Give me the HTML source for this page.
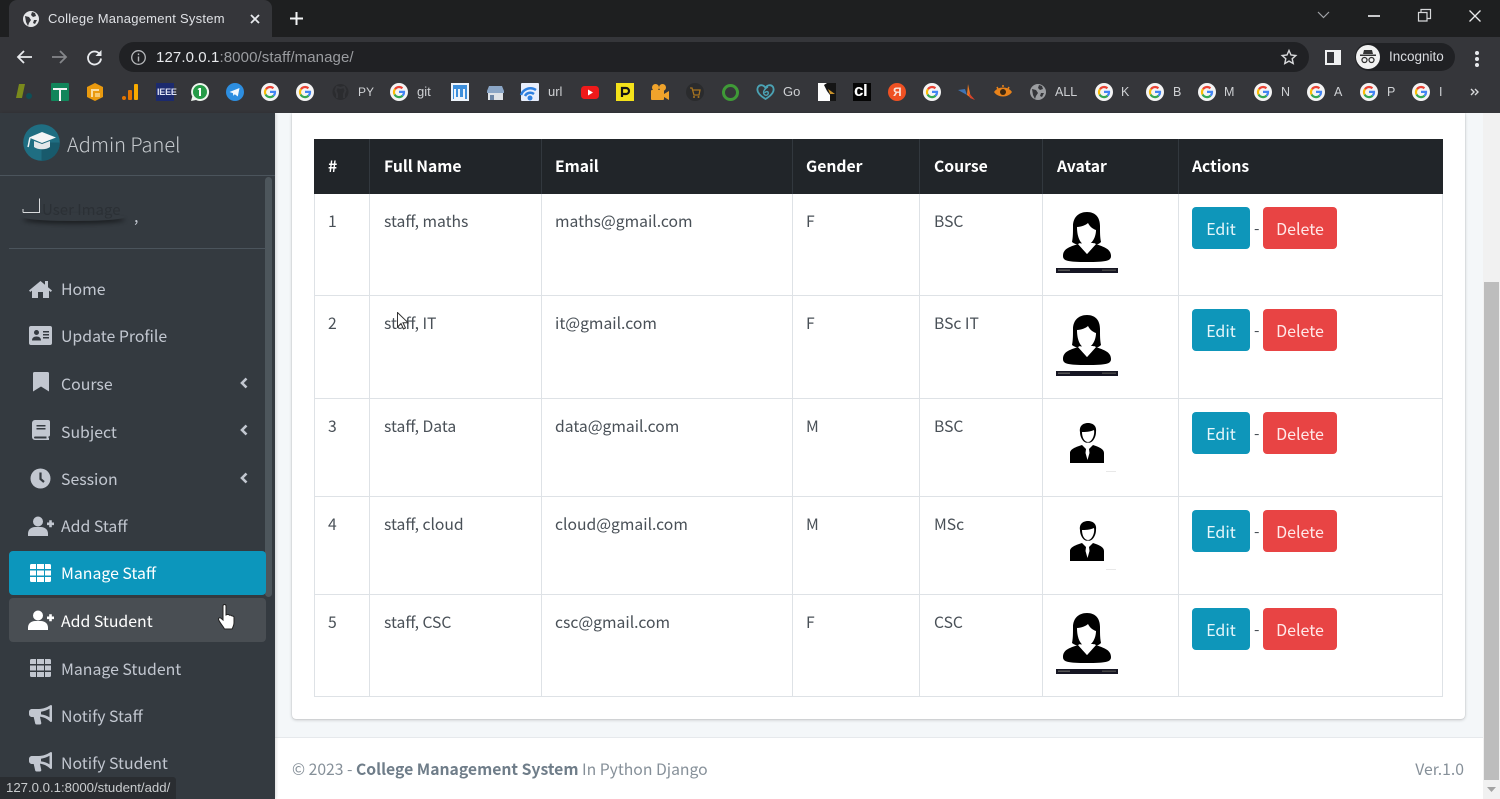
<!DOCTYPE html>
<html><head><meta charset="utf-8"><title>College Management System</title>
<style>
html,body{margin:0;padding:0;width:1500px;height:799px;overflow:hidden;background:#fff}
body{position:relative;font-family:"Noto Sans CJK SC","Liberation Sans",sans-serif;filter:blur(.35px)}
.a{position:absolute}
.t{position:absolute;white-space:nowrap;line-height:20px;height:20px}
.c{font-family:"Liberation Sans",sans-serif}
.m{font-size:15.85px;color:#c2c7d0;margin-top:1px}
.td{font-size:15.7px;color:#495057;margin-top:1px}
.th{font-size:15.7px;color:#fff;font-weight:700;margin-top:1px}
.bl{position:absolute;background:#dee2e6}
.thb{position:absolute;background:#32383e}
.b{position:absolute;height:42px;border-radius:4px;color:#fff;font-size:16px;line-height:42px;text-align:center}
.e{left:1192px;width:58px;background:#0e96ba;color:#e6f6fa}
.d{left:1263px;width:74px;background:#e84444;color:#ffe8e8}
.bk{position:absolute;font:12.5px/16px "Liberation Sans",sans-serif;color:#cfd1d4;top:84px;white-space:nowrap}
svg{position:absolute;overflow:visible}
</style></head><body>
<svg width="0" height="0" style="position:absolute">
<defs>
<symbol id="g" viewBox="0 0 18 18"><circle cx="9" cy="9" r="9" fill="#f4f4f4"/><path d="M9 4a5 5 0 0 1 3.4 1.3" stroke="#ea4335" stroke-width="2.2" fill="none"/><path d="M5 6.2A5 5 0 0 1 9 4" stroke="#ea4335" stroke-width="2.2" fill="none"/><path d="M4.6 11.5A5 5 0 0 1 5 6.2" stroke="#fbbc05" stroke-width="2.2" fill="none"/><path d="M12.6 12.6A5 5 0 0 1 4.6 11.5" stroke="#34a853" stroke-width="2.2" fill="none"/><path d="M9 8.9h5a5 5 0 0 1-1.4 3.7" stroke="#4285f4" stroke-width="2.2" fill="none"/></symbol>
<symbol id="hplus" viewBox="0 0 26 20"><circle cx="10" cy="5.5" r="5"/><path d="M0 20v-2.5C0 13.500 3.500 11 7 11h6c3.500 0 7 2.500 7 6.500V20z"/><path d="M19 6.500h7v2.600h-7zM21.200 4.300h2.600v7h-2.600z"/></symbol>
<symbol id="th" viewBox="0 0 21 18"><path d="M0 1.500A1.500 1.500 0 0 1 1.500 0H6v5H0zM7 0h7v5H7zM15 0h4.500A1.500 1.500 0 0 1 21 1.500V5h-6zM0 6.500h6v5H0zM7 6.500h7v5H7zM15 6.500h6v5h-6zM0 13h6v5H1.500A1.500 1.500 0 0 1 0 16.500zM7 13h7v5H7zM15 13h6v3.500a1.500 1.500 0 0 1-1.500 1.500H15z"/></symbol>
<symbol id="bh" viewBox="0 0 23 20"><path d="M22 0c.6 0 1 .5 1 1v15c0 .6-.4 1-1 1-.3 0-.5-.1-.7-.3C18 13.500 14.500 12 11 11.700l1.300 6.300c.1.800-.5 1.500-1.300 1.500H7.500c-.6 0-1.100-.4-1.300-1L4.700 12H3C1.300 12 0 10.700 0 9V7c0-1.700 1.300-3 3-3h7c4 0 8-1.600 11.300-3.700.2-.2.400-.3.700-.3zM20.500 3.800C18 5.300 15 6.400 12 6.700v2.700c3 .3 6 1.400 8.500 3z" fill-rule="evenodd"/></symbol>
<symbol id="fem" viewBox="0 0 62 62"><path d="M31 0C22 0 17 6 17 14C17 21 17 25 16 30C20 33 24 33 26 31L37 31C39 33 42 33 45 30C44 25 44 21 44 14C44 6 40 0 31 0Z" fill="#000"/><path d="M21 15C25 15 30 13 32 11C34 15 37 17 40 18C40 25 36 33 30 33C25 33 21 26 21 15Z" fill="#fff"/><path d="M7 44C7 37 13 35 22 32L31 42L40 32C48 35 55 37 55 44C55 49 50 50 31 50C12 50 7 49 7 44Z" fill="#000"/><path d="M24 31L31 38L38 31L31 34Z" fill="#fff"/><path d="M22 32L24 31L31 39L38 31L40 32L31 42Z" fill="#fff"/><rect y="56" width="62" height="5" fill="#161623"/><rect x="2" y="57.500" width="12" height="1.500" fill="#555"/><rect x="46" y="57.500" width="14" height="1.500" fill="#444"/></symbol>
<symbol id="mal" viewBox="0 0 36 41"><path d="M10 9C9 3 13 0 18 0C23 0 27 3 26 9C26 14 23 20 18 20C13 20 10 14 10 9Z" fill="#000"/><path d="M12 9C15 9 20 9 24 7C25 12 22 19 18 19C14 19 12 14 12 9Z" fill="#fff"/><path d="M0 40V30C0 26 6 24 12 22L16 26L15.500 30L17.500 37L19.500 30L19 26L23 22C29 24 34 26 34 30V40Z" fill="#000"/><path d="M13 20.500L16.500 25H18.500L22 20.500L18 19.500Z" fill="#fff"/></symbol>
<symbol id="cur" viewBox="0 0 12 18"><path d="M.5.500V15l3.500-3.500 2.500 5.500 2-1-2.500-5.300H11Z" fill="#fff" stroke="#333" stroke-width="1"/></symbol>
</defs>
</svg>

<!-- CHROME -->
<div class="a" style="left:0;top:0;width:1500px;height:37px;background:#1e1f20"></div>
<div class="a" style="left:0;top:37px;width:1500px;height:76px;background:#35363a"></div>
<div class="a" style="left:9px;top:0;width:263px;height:37px;background:#35363a;border-radius:8px 8px 0 0"></div>
<svg style="left:23px;top:11px" width="16" height="16" viewBox="0 0 16 16"><circle cx="8" cy="8" r="8" fill="#e4e5e7"/><path d="M2 5l4 1 2 3-2 3-1 3-2-4zM9 1l3 1 1 3-3 1-2-2zM11 9h3l-2 4-2-1z" fill="#35363a"/></svg>
<div class="t c" style="left:48px;top:9px;font-size:13px;color:#dfe1e5;letter-spacing:.25px">College Management System</div>
<svg style="left:250px;top:14px" width="10" height="10"><path d="M1 1l8 8M9 1l-8 8" stroke="#e8eaed" stroke-width="1.800"/></svg>
<svg style="left:290px;top:12px" width="13" height="13"><path d="M6.500 0v13M0 6.500h13" stroke="#f1f3f4" stroke-width="2"/></svg>
<svg style="left:1317px;top:11px" width="13" height="8"><path d="M1 1l5.500 5.500L12 1" stroke="#a0a2a6" stroke-width="1.200" fill="none"/></svg>
<div class="a" style="left:1368px;top:15px;width:12px;height:1.500px;background:#c8c9cb"></div>
<svg style="left:1418px;top:9px" width="13" height="13"><path d="M.5 3.500h8.500v8.500H.5zM3 3V.5h9.500V9.500H9.500" stroke="#d6d7d9" stroke-width="1.200" fill="none"/></svg>
<svg style="left:1469px;top:10px" width="12" height="12"><path d="M.5.500l11 11M11.500.500l-11 11" stroke="#e8e9ea" stroke-width="1.300"/></svg>
<div class="a" style="left:119px;top:42px;width:1190px;height:30px;border-radius:15px;background:#202124"></div>
<svg style="left:16px;top:49px" width="17" height="16"><path d="M16 8H2M8 2L2 8l6 6" stroke="#e8eaed" stroke-width="1.800" fill="none"/></svg>
<svg style="left:51px;top:49px" width="17" height="16"><path d="M1 8h14M9 2l6 6-6 6" stroke="#85878a" stroke-width="1.800" fill="none"/></svg>
<svg style="left:86px;top:49px" width="17" height="17"><path d="M14 5.500A6.500 6.500 0 1 0 15 9.500" stroke="#e8eaed" stroke-width="1.800" fill="none"/><path d="M15.500 1v6h-6z" fill="#e8eaed"/></svg>
<svg style="left:131px;top:50px" width="16" height="16"><circle cx="7.500" cy="7.500" r="6.800" stroke="#b5b7ba" stroke-width="1.300" fill="none"/><path d="M7.500 6.500v5M7.500 3.500v1.600" stroke="#b5b7ba" stroke-width="1.400"/></svg>
<div class="t c" style="left:156px;top:48px;font-size:15px;color:#e8eaed;letter-spacing:.1px">127.0.0.1<span style="color:#9a9ca0">:8000/staff/manage/</span></div>
<svg style="left:1281px;top:49px" width="16" height="16" viewBox="0 0 16 16"><path d="M8 1.500l2 4.500 4.800.5-3.600 3.200 1 4.800L8 12.100 3.800 14.500l1-4.800L1.200 6.500 6 6z" stroke="#d8d9db" stroke-width="1.400" fill="none"/></svg>
<svg style="left:1325px;top:50px" width="16" height="15"><rect x="1" y="1" width="14" height="13" stroke="#f0f1f2" stroke-width="2" fill="none"/><rect x="9" y="1" width="6" height="13" fill="#f0f1f2"/></svg>
<div class="a" style="left:1355px;top:43px;width:100px;height:28px;border-radius:14px;background:#202124"></div>
<div class="a" style="left:1356px;top:45px;width:24px;height:24px;border-radius:12px;background:#f1f1f1"></div>
<svg style="left:1360px;top:50px" width="16" height="14" viewBox="0 0 16 14"><path d="M4 0h8l1 4H3zM0 4.500h16V6H0z" fill="#333"/><circle cx="4.500" cy="10" r="2.500" fill="none" stroke="#333" stroke-width="1.300"/><circle cx="11.500" cy="10" r="2.500" fill="none" stroke="#333" stroke-width="1.300"/></svg>
<div class="t c" style="left:1389px;top:47px;font-size:13.5px;color:#dadce0">Incognito</div>
<div class="a" style="left:1475px;top:51px;width:4px;height:4px;border-radius:2px;background:#e8eaed;box-shadow:0 6px 0 #e8eaed,0 12px 0 #e8eaed"></div>

<!-- BOOKMARKS -->
<svg style="left:16px;top:83px" width="18" height="18"><path d="M3 1h6L6 15H0z" fill="#7a8a1c"/><circle cx="13" cy="13" r="3" fill="#0e4f57"/></svg>
<svg style="left:51px;top:83px" width="18" height="18"><rect width="18" height="18" rx="1" fill="#12855a"/><path d="M2 5h14v2H10v11H8V7H2z" fill="#f4f4f4"/></svg>
<svg style="left:86px;top:83px" width="18" height="18"><path d="M9 0l8 4v10l-8 4-8-4V4z" fill="#ea9a0e"/><path d="M5 6h8v2H7v6H5z" fill="#f9dca0"/><path d="M9 10h5v4H9z" fill="#f7c96e"/></svg>
<svg style="left:122px;top:83px" width="16" height="18"><rect x="0" y="13" width="4" height="4" rx="2" fill="#e37400"/><rect x="6" y="7" width="4" height="10" rx="1" fill="#e37400"/><rect x="12" y="1" width="4" height="16" rx="1" fill="#f9ab00"/></svg>
<div class="a" style="left:156px;top:83px;width:18px;height:18px;background:#1c2a6d"></div>
<div class="t c" style="left:157px;top:82px;font-size:9px;font-weight:700;color:#dfe3f5;letter-spacing:-.2px">IEEE</div>
<svg style="left:191px;top:83px" width="18" height="18"><path d="M9 0a9 9 0 1 1-4 17l-5 1 1.300-4.500A9 9 0 0 1 9 0z" fill="#eef5ee"/><circle cx="9" cy="9" r="7" fill="#259b47"/><path d="M8 5h2v8H8zM6.500 6.500L8 5v2z" fill="#fff"/></svg>
<svg style="left:226px;top:83px" width="18" height="18"><circle cx="9" cy="9" r="9" fill="#2d8ee0"/><path d="M3.500 9l10-4-1.700 8.500-3-2.200-1.500 1.500-.4-2.700z" fill="#f2f8fd"/></svg>
<svg style="left:261px;top:83px" width="18" height="18"><use href="#g"/></svg>
<svg style="left:296px;top:83px" width="18" height="18"><use href="#g"/></svg>
<svg style="left:332px;top:83px" width="17" height="18"><circle cx="8.500" cy="9" r="8" fill="#2b2c2f"/><path d="M5 15v-4L3.500 7.500 5 4l3.500 1L12 4l1.500 3.500L12 11v4" fill="none" stroke="#35363a" stroke-width="2"/></svg>
<div class="bk" style="left:358px;font-size:12px">PY</div>
<svg style="left:390px;top:83px" width="18" height="18"><use href="#g"/></svg>
<div class="bk" style="left:417px;font-size:13px">git</div>
<svg style="left:451px;top:83px" width="18" height="18"><rect width="18" height="18" fill="#eef4fb"/><path d="M2 2h14v14h-2V6h-2v8H9V6H7v8H5V6H3v10H2z" fill="#3d8fdc"/></svg>
<svg style="left:487px;top:84px" width="17" height="16"><path d="M2 2h13l2 5v2H0V7z" fill="#8ba6c6"/><path d="M1 9h15v7H1z" fill="#dfe3e8"/><path d="M3 11h4v5H3z" fill="#6d86a6"/></svg>
<svg style="left:521px;top:83px" width="18" height="18"><rect width="18" height="18" rx="1" fill="#e8eefc"/><path d="M0 12a10 10 0 0 1 15-5M4 13a6 6 0 0 1 9-2" stroke="#2f80e0" stroke-width="2.500" fill="none"/><circle cx="9" cy="15" r="2.500" fill="#2f80e0"/></svg>
<div class="bk" style="left:548px;font-size:13px">url</div>
<svg style="left:581px;top:86px" width="18" height="13"><rect width="18" height="13" rx="3.500" fill="#ef1a1a"/><path d="M7 3.500l5 3-5 3z" fill="#fff"/></svg>
<svg style="left:616px;top:83px" width="18" height="18"><rect width="18" height="18" fill="#f4e21a"/><path d="M6 14V5h4a3 3 0 0 1 0 6H7" stroke="#151515" stroke-width="2.200" fill="none"/></svg>
<svg style="left:651px;top:84px" width="18" height="17"><circle cx="4.500" cy="3.500" r="3.500" fill="#f0a32b"/><circle cx="11.500" cy="3.500" r="3.500" fill="#f0a32b"/><rect y="6" width="13" height="10" rx="1" fill="#f0a32b"/><path d="M13 10l5-3v9l-5-3z" fill="#f0a32b"/></svg>
<svg style="left:686px;top:83px" width="18" height="18"><circle cx="9" cy="9" r="9" fill="#2a2b2d"/><path d="M4 5h2l2 7h5l1-5H7" stroke="#a8741f" stroke-width="1.300" fill="none"/><circle cx="8" cy="14" r="1" fill="#a8741f"/><circle cx="12.500" cy="14" r="1" fill="#a8741f"/></svg>
<svg style="left:722px;top:84px" width="18" height="18"><circle cx="8.500" cy="8.500" r="7" fill="none" stroke="#3f9a37" stroke-width="3"/></svg>
<svg style="left:756px;top:83px" width="19" height="18"><path d="M9.500 16C3 12 0 8 2 4 4 1 8 2 9.500 5 11 2 15 1 17 4 19 8 16 12 9.500 16z" fill="none" stroke="#4ba3b5" stroke-width="1.800"/><path d="M12 4C8 6 6 10 9 12c2 1 4-1 3-3-1-1-3 0-3 1" fill="none" stroke="#4ba3b5" stroke-width="1.400"/></svg>
<div class="bk" style="left:783px;font-size:13px">Go</div>
<svg style="left:818px;top:83px" width="18" height="18"><rect width="18" height="18" fill="#fdfdfd"/><path d="M9 0h9v18h-6V12L9 8 6 2z" fill="#151515"/><path d="M10 6l7 5-5 0z" fill="#c9922a"/><path d="M0 8c3-3 6-3 9 0l2 8H0z" fill="#fdfdfd"/></svg>
<div class="a" style="left:853px;top:83px;width:18px;height:18px;background:#050505"></div>
<div class="t c" style="left:854px;top:81px;font-size:17px;font-weight:700;color:#fff;letter-spacing:-.5px">cl</div>
<svg style="left:888px;top:83px" width="18" height="18"><circle cx="9" cy="9" r="9" fill="#ef5123"/></svg>
<div class="t c" style="left:893px;top:82px;font-size:12px;font-weight:700;color:#f9e3da">Я</div>
<svg style="left:923px;top:83px" width="18" height="18"><use href="#g"/></svg>
<svg style="left:958px;top:84px" width="17" height="16"><path d="M10 0l3 14-4-3z" fill="#ef7a22"/><path d="M9 11l-9-5 7-1z" fill="#3f74b5"/><path d="M10 8l7 8-5-2z" fill="#d8442a"/></svg>
<svg style="left:994px;top:84px" width="18" height="15"><path d="M0 8c4-6 14-6 18 0-4 6-14 6-18 0z" fill="#e8821a"/><circle cx="9" cy="8" r="3" fill="#3a2610"/><path d="M3 3l1 2M9 1v2M15 3l-1 2" stroke="#e8821a" stroke-width="1.500"/></svg>
<svg style="left:1030px;top:84px" width="16" height="16"><circle cx="8" cy="8" r="8" fill="#9c9ea1"/><path d="M2 5l4 1 2 3-2 3-1 3-2-4zM9 1l3 1 1 3-3 1-2-2zM11 9h3l-2 4-2-1z" fill="#35363a"/></svg>
<div class="bk" style="left:1055px;font-size:12.500px">ALL</div>
<svg style="left:1095px;top:83px" width="18" height="18"><use href="#g"/></svg><div class="bk" style="left:1121px">K</div>
<svg style="left:1146px;top:83px" width="18" height="18"><use href="#g"/></svg><div class="bk" style="left:1173px">B</div>
<svg style="left:1198px;top:83px" width="18" height="18"><use href="#g"/></svg><div class="bk" style="left:1224px">M</div>
<svg style="left:1254px;top:83px" width="18" height="18"><use href="#g"/></svg><div class="bk" style="left:1281px">N</div>
<svg style="left:1307px;top:83px" width="18" height="18"><use href="#g"/></svg><div class="bk" style="left:1334px">A</div>
<svg style="left:1360px;top:83px" width="18" height="18"><use href="#g"/></svg><div class="bk" style="left:1387px">P</div>
<svg style="left:1412px;top:83px" width="18" height="18"><use href="#g"/></svg><div class="bk" style="left:1439px">I</div>
<svg style="left:1470px;top:88px" width="9" height="8"><path d="M1 1l3 3-3 3M5 1l3 3-3 3" stroke="#d8d9db" stroke-width="1.400" fill="none"/></svg>

<!-- CONTENT -->
<div class="a" style="left:275px;top:113px;width:1208px;height:624px;background:#f4f7f9"></div>
<div class="a" style="left:292px;top:113px;width:1173px;height:606px;background:#fff;border-radius:0 0 4px 4px;box-shadow:0 0 1px rgba(0,0,0,.2),0 1px 3px rgba(0,0,0,.2)"></div>
<div class="a" style="left:275px;top:737px;width:1208px;height:62px;background:#fff;border-top:1px solid #e6e9ec;box-sizing:border-box"></div>

<!-- TABLE -->
<div class="a" style="left:314px;top:139px;width:1129px;height:55px;background:#212529"></div>
<div class="thb" style="left:369px;top:139px;width:1px;height:55px"></div>
<div class="thb" style="left:541px;top:139px;width:1px;height:55px"></div>
<div class="thb" style="left:792px;top:139px;width:1px;height:55px"></div>
<div class="thb" style="left:919px;top:139px;width:1px;height:55px"></div>
<div class="thb" style="left:1042px;top:139px;width:1px;height:55px"></div>
<div class="thb" style="left:1178px;top:139px;width:1px;height:55px"></div>
<div class="bl" style="left:314px;top:194px;width:1px;height:503px"></div>
<div class="bl" style="left:369px;top:194px;width:1px;height:503px"></div>
<div class="bl" style="left:541px;top:194px;width:1px;height:503px"></div>
<div class="bl" style="left:792px;top:194px;width:1px;height:503px"></div>
<div class="bl" style="left:919px;top:194px;width:1px;height:503px"></div>
<div class="bl" style="left:1042px;top:194px;width:1px;height:503px"></div>
<div class="bl" style="left:1178px;top:194px;width:1px;height:503px"></div>
<div class="bl" style="left:1442px;top:194px;width:1px;height:503px"></div>
<div class="bl" style="left:314px;top:295px;width:1129px;height:1px"></div>
<div class="bl" style="left:314px;top:398px;width:1129px;height:1px"></div>
<div class="bl" style="left:314px;top:496px;width:1129px;height:1px"></div>
<div class="bl" style="left:314px;top:594px;width:1129px;height:1px"></div>
<div class="bl" style="left:314px;top:696px;width:1129px;height:1px"></div>

<div class="t th" style="left:328px;top:155px">#</div>
<div class="t th" style="left:384px;top:155px">Full Name</div>
<div class="t th" style="left:555px;top:155px">Email</div>
<div class="t th" style="left:806px;top:155px">Gender</div>
<div class="t th" style="left:934px;top:155px">Course</div>
<div class="t th" style="left:1057px;top:155px">Avatar</div>
<div class="t th" style="left:1192px;top:155px">Actions</div>

<div class="t td" style="left:328px;top:210px">1</div><div class="t td" style="left:384px;top:210px">staff, maths</div><div class="t td" style="left:555px;top:210px">maths@gmail.com</div><div class="t td" style="left:806px;top:210px">F</div><div class="t td" style="left:934px;top:210px">BSC</div>
<div class="t td" style="left:328px;top:312px">2</div><div class="t td" style="left:384px;top:312px">staff, IT</div><div class="t td" style="left:555px;top:312px">it@gmail.com</div><div class="t td" style="left:806px;top:312px">F</div><div class="t td" style="left:934px;top:312px">BSc IT</div>
<div class="t td" style="left:328px;top:415px">3</div><div class="t td" style="left:384px;top:415px">staff, Data</div><div class="t td" style="left:555px;top:415px">data@gmail.com</div><div class="t td" style="left:806px;top:415px">M</div><div class="t td" style="left:934px;top:415px">BSC</div>
<div class="t td" style="left:328px;top:513px">4</div><div class="t td" style="left:384px;top:513px">staff, cloud</div><div class="t td" style="left:555px;top:513px">cloud@gmail.com</div><div class="t td" style="left:806px;top:513px">M</div><div class="t td" style="left:934px;top:513px">MSc</div>
<div class="t td" style="left:328px;top:611px">5</div><div class="t td" style="left:384px;top:611px">staff, CSC</div><div class="t td" style="left:555px;top:611px">csc@gmail.com</div><div class="t td" style="left:806px;top:611px">F</div><div class="t td" style="left:934px;top:611px">CSC</div>

<svg style="left:1056px;top:212px" width="62" height="62"><use href="#fem"/></svg>
<svg style="left:1056px;top:315px" width="62" height="62"><use href="#fem"/></svg>
<svg style="left:1070px;top:423px" width="36" height="41"><use href="#mal"/></svg>
<div class="a" style="left:1106px;top:471px;width:10px;height:1px;background:#e8e8e8"></div>
<svg style="left:1070px;top:521px" width="36" height="41"><use href="#mal"/></svg>
<div class="a" style="left:1106px;top:569px;width:10px;height:1px;background:#e8e8e8"></div>
<svg style="left:1056px;top:613px" width="62" height="62"><use href="#fem"/></svg>

<div class="b e" style="top:207px">Edit</div><div class="t td" style="left:1254px;top:217px">-</div><div class="b d" style="top:207px">Delete</div>
<div class="b e" style="top:309px">Edit</div><div class="t td" style="left:1254px;top:319px">-</div><div class="b d" style="top:309px">Delete</div>
<div class="b e" style="top:412px">Edit</div><div class="t td" style="left:1254px;top:422px">-</div><div class="b d" style="top:412px">Delete</div>
<div class="b e" style="top:510px">Edit</div><div class="t td" style="left:1254px;top:520px">-</div><div class="b d" style="top:510px">Delete</div>
<div class="b e" style="top:608px">Edit</div><div class="t td" style="left:1254px;top:618px">-</div><div class="b d" style="top:608px">Delete</div>

<!-- FOOTER -->
<div class="t" style="left:292px;top:759px;font-size:15.73px;color:#869099">© 2023 - <b style="color:#6f7d89">College Management System</b> In Python Django</div>
<div class="t" style="right:36px;top:759px;font-size:15.73px;color:#869099">Ver.1.0</div>

<!-- PAGE SCROLLBAR -->
<div class="a" style="left:1483px;top:113px;width:17px;height:686px;background:#f1f1f1"></div>
<div class="a" style="left:1484px;top:282px;width:15px;height:498px;background:#bdbdbd"></div>
<svg style="left:1487px;top:787px" width="9" height="6"><path d="M0 0h9L4.500 5z" fill="#a3a3a3"/></svg>

<!-- SIDEBAR -->
<div class="a" style="left:0;top:113px;width:275px;height:686px;background:#343a40;box-shadow:1px 0 3px rgba(0,0,0,.15)"></div>
<div class="a" style="left:0;top:175px;width:275px;height:1px;background:#4b545c"></div>
<div class="a" style="left:265px;top:177px;width:7px;height:420px;border-radius:4px;background:#4d565c"></div>
<svg style="left:23px;top:124px" width="37" height="37" viewBox="0 0 37 37"><circle cx="18.500" cy="18.500" r="18.300" fill="#1f6e82"/><path d="M18.500 18.500V37A18.300 18.300 0 0 0 36.800 18.500z" fill="#185a6c"/><path d="M19 8L33 13.500 19 19 6 13.500z" fill="#f3f5f6"/><path d="M11 17v6c4 3 12 3 16 0v-6l-8 3z" fill="#e3e7e9"/><path d="M7 14c-1 3-1 6-2 9" stroke="#f3f5f6" stroke-width="1.500" fill="none"/></svg>
<div class="t" style="left:67px;top:134px;font-size:20px;font-weight:300;color:#c5c9cd">Admin Panel</div>
<div class="a" style="left:23px;top:213px;width:102px;height:8px;border-radius:50%;box-shadow:0 3px 4px rgba(0,0,0,.45)"></div>
<svg style="left:22px;top:198px" width="20" height="17"><path d="M1 11v3.500M1 14.500h16.500V0.500" stroke="#d8dadc" stroke-width="1" fill="none"/></svg>
<div class="t" style="left:42px;top:200px;font-size:15px;color:#2b3035">User Image</div>
<div class="t" style="left:134px;top:205px;font-size:16px;color:#c2c7d0">,</div>
<div class="a" style="left:9px;top:248px;width:257px;height:1px;background:#4b545c"></div>

<div class="a" style="left:9px;top:551px;width:257px;height:44px;background:#0c96bc;border-radius:4px"></div>
<div class="a" style="left:9px;top:598px;width:257px;height:44px;background:#494e53;border-radius:4px"></div>

<svg style="left:29px;top:279px;fill:#c2c7d0" width="23" height="19" viewBox="0 0 23 19"><path d="M11.500 2L0 11.500l1.200 1.500L3 11.600V19h6v-6h5v6h6v-7.400l1.800 1.400L23 11.500 19 8.200V2h-3v3.700z"/></svg>
<div class="t m" style="left:61px;top:278px">Home</div>
<svg style="left:29px;top:326px;fill:#c2c7d0" width="23" height="19" viewBox="0 0 23 19"><path fill-rule="evenodd" d="M2 0h19a2 2 0 0 1 2 2v15a2 2 0 0 1-2 2H2a2 2 0 0 1-2-2V2a2 2 0 0 1 2-2zM7.500 4a2.500 2.500 0 1 0 0 5 2.500 2.500 0 0 0 0-5zM3 14.500h9c0-2.500-1.500-4-4.500-4S3 12 3 14.500zM14 5v1.500h6V5zM14 8v1.500h6V8zM14 11v1.500h6V11z"/></svg>
<div class="t m" style="left:61px;top:325px">Update Profile</div>
<svg style="left:33px;top:372px;fill:#c2c7d0" width="16" height="20"><path d="M0 1.500A1.500 1.500 0 0 1 1.500 0h13A1.500 1.500 0 0 1 16 1.500V19.500l-8-5-8 5z"/></svg>
<div class="t m" style="left:61px;top:373px">Course</div>
<svg style="left:239px;top:377px" width="9" height="12"><path d="M7.500 1.500L3 6l4.500 4.500" stroke="#c2c7d0" stroke-width="2.600" fill="none"/></svg>
<svg style="left:32px;top:420px;fill:#c2c7d0" width="18" height="20" viewBox="0 0 18 20"><path fill-rule="evenodd" d="M3 0h13a2 2 0 0 1 2 2v13c0 1-.6 1.500-1.500 1.500V18H17v2H3a3 3 0 0 1-3-3V3a3 3 0 0 1 3-3zM4.500 5v1.500h9V5zM4.500 8v1.500h9V8zM3 16.500a1 1 0 0 0 0 2h11.500v-2z"/></svg>
<div class="t m" style="left:61px;top:421px">Subject</div>
<svg style="left:239px;top:424px" width="9" height="12"><path d="M7.500 1.500L3 6l4.500 4.500" stroke="#c2c7d0" stroke-width="2.600" fill="none"/></svg>
<svg style="left:30px;top:468px" width="21" height="21"><circle cx="10.500" cy="10.500" r="10" fill="#c2c7d0"/><path d="M10.500 4.500v6.500l3.500 3" stroke="#343a40" stroke-width="2.200" fill="none"/></svg>
<div class="t m" style="left:61px;top:468px">Session</div>
<svg style="left:239px;top:472px" width="9" height="12"><path d="M7.500 1.500L3 6l4.500 4.500" stroke="#c2c7d0" stroke-width="2.600" fill="none"/></svg>
<svg style="left:28px;top:516px;fill:#c2c7d0" width="26" height="20"><use href="#hplus"/></svg>
<div class="t m" style="left:61px;top:515px">Add Staff</div>
<svg style="left:30px;top:564px;fill:#fff" width="21" height="18"><use href="#th"/></svg>
<div class="t m" style="left:61px;top:562px;color:#fff">Manage Staff</div>
<svg style="left:28px;top:610px;fill:#fff" width="26" height="20"><use href="#hplus"/></svg>
<div class="t m" style="left:61px;top:610px;color:#fff">Add Student</div>
<svg style="left:30px;top:659px;fill:#c2c7d0" width="21" height="18"><use href="#th"/></svg>
<div class="t m" style="left:61px;top:658px">Manage Student</div>
<svg style="left:29px;top:705px;fill:#c2c7d0" width="23" height="20"><use href="#bh"/></svg>
<div class="t m" style="left:61px;top:705px">Notify Staff</div>
<svg style="left:29px;top:752px;fill:#c2c7d0" width="23" height="20"><use href="#bh"/></svg>
<div class="t m" style="left:61px;top:752px">Notify Student</div>

<div class="a" style="left:0;top:777px;width:176px;height:22px;background:#2a2d31;border-radius:0 3px 0 0"></div>
<div class="t c" style="left:6px;top:778px;font-size:13.2px;color:#c9ccce">127.0.0.1:8000/student/add/</div>

<!-- CURSORS -->
<svg style="left:397px;top:312px" width="12" height="18"><use href="#cur"/></svg>
<svg style="left:218px;top:604px" width="17" height="26" viewBox="0 0 17 26"><path d="M5 2a1.500 1.500 0 0 1 3 0v9l1-.5 1.500 0 1 .7 1.500 0 1 .8c1.300-.2 2 .5 2 1.500v5c0 3-1.500 5.500-2 6.500H6.500C5 22 2 19 .7 16c-.7-1.700.8-3 2.300-1.800L5 16z" fill="#fff" stroke="#222" stroke-width="1"/></svg>
</body></html>
